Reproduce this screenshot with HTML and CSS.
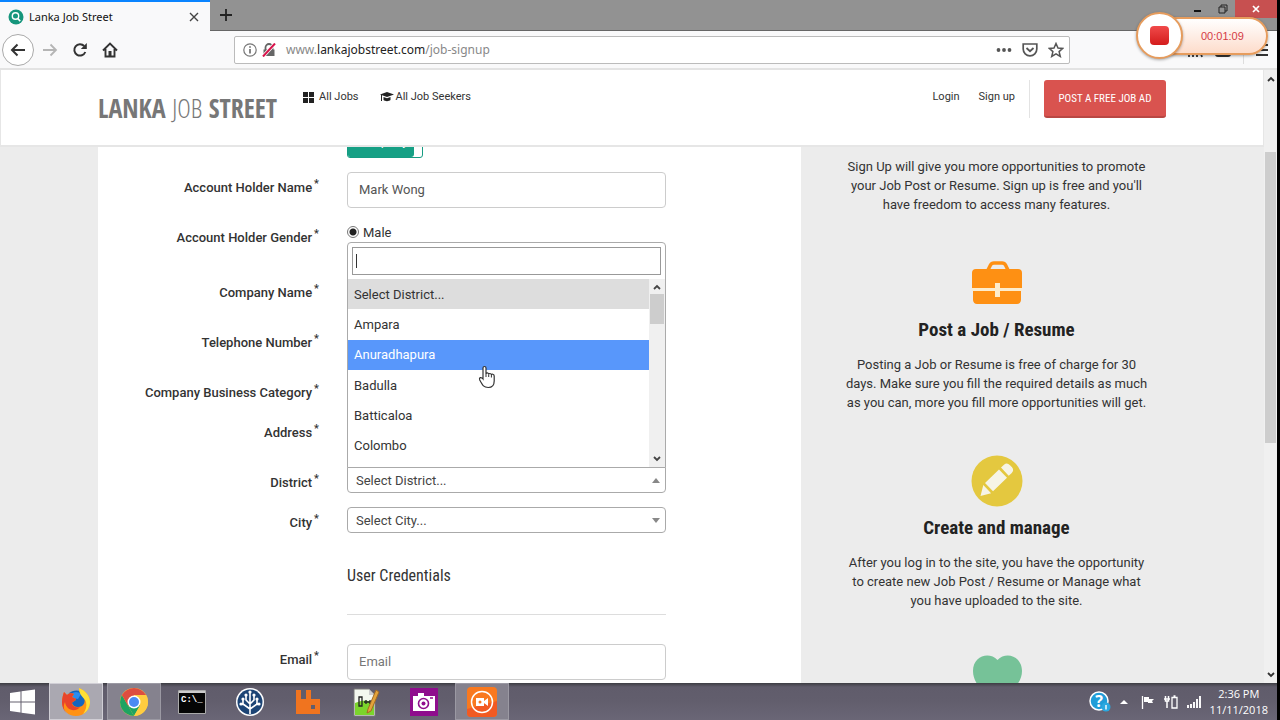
FILE: index.html
```html
<!DOCTYPE html>
<html lang="en">
<head>
    <meta charset="UTF-8">
    <meta name="viewport" content="width=device-width, initial-scale=1.0">
    <title>Lanka Job Street</title>
    <link rel="stylesheet" href="styles.css">
</head>
<body>

<div class="titlebar">
    <div class="tab">
        <svg width="16" height="16" viewBox="0 0 16 16"><circle cx="8" cy="8" r="7.5" fill="#16967c"/><circle cx="7.5" cy="7" r="3.2" fill="none" stroke="#fff" stroke-width="1.4"/><path d="M9.8 9.5l2.4 2.6" stroke="#fff" stroke-width="1.6"/></svg>
        <span class="tab-title">Lanka Job Street</span>
        <button class="icon-btn" aria-label="Close tab"><svg width="10" height="10" viewBox="0 0 10 10"><path d="M1 1l8 8M9 1l-8 8" stroke="#444" stroke-width="1.4"/></svg></button>
    </div>
    <button class="icon-btn new-tab" aria-label="New tab"><svg width="14" height="14" viewBox="0 0 14 14"><path d="M7 1v12M1 7h12" stroke="#222" stroke-width="1.8"/></svg></button>
    <div class="window-buttons">
        <button class="icon-btn" aria-label="Minimize"><svg width="10" height="10" viewBox="0 0 10 10"><path d="M1 7h7" stroke="#111" stroke-width="2"/></svg></button>
        <button class="icon-btn" aria-label="Restore"><svg width="10" height="10" viewBox="0 0 10 10"><path d="M1 3h6v6H1zM3 3V1h6v6H7" fill="none" stroke="#222"/></svg></button>
        <button class="icon-btn close-window" aria-label="Close"><svg width="8" height="8" viewBox="0 0 8 8"><path d="M1 1l6 6M7 1L1 7" stroke="#fff" stroke-width="1.7"/></svg></button>
    </div>
</div>

<div class="toolbar">
    <button class="icon-btn back" aria-label="Back"><svg width="16" height="14" viewBox="0 0 16 14"><path d="M15 7H2M7.5 1.5L2 7l5.500 5.500" fill="none" stroke="#333" stroke-width="2"/></svg></button>
    <button class="icon-btn" aria-label="Forward"><svg width="16" height="14" viewBox="0 0 16 14"><path d="M1 7h13M8.500 1.500L14 7l-5.500 5.500" fill="none" stroke="#b5b5b5" stroke-width="1.800"/></svg></button>
    <button class="icon-btn" aria-label="Reload"><svg width="16" height="16" viewBox="0 0 16 16"><path d="M13.300 10A5.700 5.700 0 1 1 12.200 4" fill="none" stroke="#333" stroke-width="2"/><path d="M14.800 1v6h-6z" fill="#333"/></svg></button>
    <button class="icon-btn" aria-label="Home"><svg width="16" height="16" viewBox="0 0 16 16"><path d="M1 8.500L8 1.500l7 7M3.500 7v7.500h9V7" fill="none" stroke="#333" stroke-width="1.900"/><path d="M6.500 9h3v6h-3z" fill="#333"/></svg></button>
    <div class="urlbar">
        <svg width="14" height="14" viewBox="0 0 14 14"><circle cx="7" cy="7" r="6.200" fill="none" stroke="#777" stroke-width="1.200"/><path d="M7 6v4.500M7 3.200v1.600" stroke="#666" stroke-width="1.600"/></svg>
        <svg width="14" height="14" viewBox="0 0 14 14"><path d="M3.500 7V4.500a3.500 3.500 0 0 1 7 0V7" fill="none" stroke="#666" stroke-width="1.800"/><path d="M1.500 6.500h11V13h-11z" fill="#666"/><path d="M1 13.500L13 .500" stroke="#fff" stroke-width="3.500"/><path d="M1 13.500L13 .500" stroke="#d7134a" stroke-width="2"/></svg>
        <span class="url">www.<b>lankajobstreet.com</b>/job-signup</span>
        <svg width="16" height="16" viewBox="0 0 16 16"><circle cx="2.500" cy="8" r="1.900" fill="#555"/><circle cx="8" cy="8" r="1.900" fill="#555"/><circle cx="13.500" cy="8" r="1.900" fill="#555"/></svg>
        <svg width="16" height="16" viewBox="0 0 16 16"><path d="M1.200 2h13.600v5a6.800 6.800 0 0 1-13.600 0z" fill="none" stroke="#555" stroke-width="1.700"/><path d="M4.500 6L8 9.200 11.500 6" fill="none" stroke="#555" stroke-width="1.800"/></svg>
        <svg width="16" height="16" viewBox="0 0 16 16"><path d="M8 1.500l2 4.500 4.700.4-3.600 3.200 1.200 4.900L8 11.900l-4.300 2.600 1.200-4.900L1.300 6.400 6 6z" fill="none" stroke="#555" stroke-width="1.500"/></svg>
    </div>
    <div class="toolbar-end">
        <svg width="16" height="16" viewBox="0 0 16 16"><path d="M2 2v13M6 2v13M10 2v13M11 3l4 12" stroke="#333" stroke-width="1.800"/></svg>
        <svg width="16" height="16" viewBox="0 0 16 16"><rect x="1" y="3" width="14" height="11" rx="2" fill="none" stroke="#333" stroke-width="2"/></svg>
        <span class="separator"></span>
        <svg width="12" height="14" viewBox="0 0 12 14"><path d="M0 2h12M0 7h12M0 12h12" stroke="#333" stroke-width="1.800"/></svg>
    </div>
</div>

<div class="viewport">
    <div class="page">
        <header class="site-header">
            <div class="container header-row">
                <a class="logo" href="#">LANKA <span>JOB</span> STREET</a>
                <nav class="site-nav">
                    <a href="#"><svg width="11" height="11" viewBox="0 0 11 11"><path d="M0 0h5v5H0zM6 0h5v5H6zM0 6h5v5H0zM6 6h5v5H6z" fill="#222"/></svg> All Jobs</a>
                    <a class="seekers" href="#"><svg width="14" height="12" viewBox="0 0 14 12"><path d="M7 1l7 2.500L7 6 0 3.500z" fill="#222"/><path d="M3.500 6l3.500 1.300L10.500 6v3c-1.500 1.500-5.500 1.500-7 0z" fill="#222"/><path d="M1.500 4v6" stroke="#222"/></svg> All Job Seekers</a>
                </nav>
                <div class="account">
                    <a href="#">Login</a>
                    <a href="#">Sign up</a>
                    <span class="divider"></span>
                    <button class="post-ad">POST A FREE JOB AD</button>
                </div>
            </div>
        </header>

        <div class="content">
            <div class="container columns">
                <form class="signup">
                    <div class="row">
                        <label for="accountType"></label>
                        <button type="button" class="toggle" id="accountType"><span>Company</span></button>
                    </div>
                    <div class="row">
                        <label for="holderName">Account Holder Name<sup>*</sup></label>
                        <input class="text" type="text" id="holderName" value="Mark Wong">
                    </div>
                    <div class="row">
                        <label for="male">Account Holder Gender<sup>*</sup></label>
                        <div class="gender">
                            <input type="radio" id="male" name="gender" checked>
                            <label for="male">Male</label>
                        </div>
                    </div>
                    <div class="row">
                        <label for="companyName">Company Name<sup>*</sup></label>
                        <input class="text" type="text" id="companyName">
                    </div>
                    <div class="row">
                        <label for="phone">Telephone Number<sup>*</sup></label>
                        <input class="text" type="text" id="phone">
                    </div>
                    <div class="row">
                        <label for="category">Company Business Category<sup>*</sup></label>
                        <div class="select"><select id="category"></select></div>
                    </div>
                    <div class="row">
                        <label for="address">Address<sup>*</sup></label>
                        <input class="text" type="text" id="address">
                    </div>
                    <div class="row">
                        <label for="district">District<sup>*</sup></label>
                        <div class="select open">
                            <select id="district"><option>Select District...</option></select>
                            <div class="dropdown">
                                <div class="search"><input type="text" aria-label="Search district"><span class="caret"></span></div>
                                <div class="results">
                                    <ul>
                                        <li class="selected">Select District...</li>
                                        <li>Ampara</li>
                                        <li class="highlighted">Anuradhapura</li>
                                        <li>Badulla</li>
                                        <li>Batticaloa</li>
                                        <li>Colombo</li>
                                    </ul>
                                    <div class="scrollbar">
                                        <svg width="8" height="6" viewBox="0 0 8 6"><path d="M1 5l3-3 3 3" fill="none" stroke="#444" stroke-width="1.800"/></svg>
                                        <span class="thumb"></span>
                                        <svg width="8" height="6" viewBox="0 0 8 6"><path d="M1 1l3 3 3-3" fill="none" stroke="#444" stroke-width="1.800"/></svg>
                                    </div>
                                </div>
                                <svg class="pointer" width="18" height="24" viewBox="0 0 18 24"><path d="M5 14V3c0-2 3-2 3 0v6c0-1.500 2.700-1.500 2.700.5 0-1.500 2.700-1.300 2.700.5 0-1.300 2.800-1 2.800 1v5c0 4-2 6.500-6 6.500-4.500 0-5.500-2-8.500-7.500C.8 12.500 3 11.500 5 14z" fill="#fff" stroke="#333" stroke-width="1.200"/><path d="M8 9v3M10.700 9.500V12M13.400 10v2.500" stroke="#333"/></svg>
                            </div>
                        </div>
                    </div>
                    <div class="row">
                        <label for="city">City<sup>*</sup></label>
                        <div class="select"><select id="city"><option>Select City...</option></select></div>
                    </div>
                    <h3 class="section">User Credentials</h3>
                    <div class="row">
                        <label for="email">Email<sup>*</sup></label>
                        <input class="text" type="email" id="email" placeholder="Email">
                    </div>
                </form>

                <aside class="features">
                    <section>
                        <p>Sign Up will give you more opportunities to promote<br>your Job Post or Resume. Sign up is free and you'll<br>have freedom to access many features.</p>
                    </section>
                    <section>
                        <svg width="52" height="52" viewBox="0 0 52 52"><path d="M17 13l2.500-5Q20.500 6 23 6h8q2.500 0 3.500 2l2.500 5" fill="none" stroke="#fe9013" stroke-width="3.500"/><path d="M5 12h42q4 0 4 4v15H29v-5h-5v5H1V16q0-4 4-4z" fill="#fe9013"/><path d="M24 26h5v14h-5zM1 31h50v3H1z" fill="#fdeccb"/><path d="M2 34h22v6h5v-6h21v9q-.5 4-4 4H6q-3.500 0-4-4z" fill="#fe9013"/></svg>
                        <h3>Post a Job / Resume</h3>
                        <p>Posting a Job or Resume is free of charge for 30<br>days. Make sure you fill the required details as much<br>as you can, more you fill more opportunities will get.</p>
                    </section>
                    <section>
                        <svg width="52" height="52" viewBox="0 0 52 52"><circle cx="26" cy="26" r="25.500" fill="#e4c83f"/><path d="M9.500 41l2.800-11 7.800 8.200zM14 28l14-13.500 8 8.300-14 13.500zM30 12.500l3-2.800q3-2.500 6 .5l2 2q2.500 3-.5 6l-2.800 2.500z" fill="#f6f4e6"/></svg>
                        <h3>Create and manage</h3>
                        <p>After you log in to the site, you have the opportunity<br>to create new Job Post / Resume or Manage what<br>you have uploaded to the site.</p>
                    </section>
                    <section>
                        <svg width="52" height="52" viewBox="0 0 52 52"><path d="M26 50C14 41 2 31 2 18 2 3 18-2 26.500 7 35-2 51 3 51 18c0 13-13 23-25 32z" fill="#76c298"/></svg>
                    </section>
                </aside>
            </div>
        </div>
    </div>
    <div class="page-scrollbar">
        <svg width="8" height="6" viewBox="0 0 8 6"><path d="M1 5l3-3 3 3" fill="none" stroke="#333" stroke-width="1.800"/></svg>
        <span class="track"><span class="thumb"></span></span>
        <svg width="8" height="6" viewBox="0 0 8 6"><path d="M1 1l3 3 3-3" fill="none" stroke="#333" stroke-width="1.800"/></svg>
    </div>
</div>

<div class="taskbar">
    <button class="start" aria-label="Start"><svg width="26" height="26" viewBox="0 0 26 26"><path d="M0 4l10.500-1.500v10H0zM11.500 2.300L25 .5v12H11.500zM0 13.500h10.500v10L0 22zM11.500 13.500H25v12l-13.500-1.800z" fill="#fff"/></svg></button>
    <button class="active" aria-label="Firefox">
        <svg width="30" height="30" viewBox="0 0 30 30"><circle cx="15.500" cy="14.500" r="11" fill="#1565c0"/><path d="M10 7q5-4 10 0l-3 5-6-1z" fill="#2b8df0"/><path d="M18 1c7 3 11 8 11 14a14 14 0 0 1-14 14C7 29 1 23 1 15c0-4 1-7 2-10l3 3c2-2 5-2 7-1l-2 3 4 2c0 2-3 2-4 4 1 4 6 5 10 3 4-3 3-8 0-11-3-3-3-4-3-7z" fill="#ff9214"/><path d="M3 5l3 3c2-2 5-2 7-1l-2 3 4 2c0 2-3 2-4 4 0 3 4 5 8 4-5 6-14 3-15-5-3 6 0 12 6 14C4 27 1 21 1 15c0-4 1-7 2-10z" fill="#e8442b"/><path d="M18 1c7 3 11 8 11 14 0 5-3 10-7 12 3-4 4-8 3-12s-7-6-7-14z" fill="#ffdf34"/></svg>
    </button>
    <button class="running" aria-label="Chrome">
        <svg width="28" height="28" viewBox="0 0 28 28"><circle cx="14" cy="14" r="14" fill="#ffcd40"/><path d="M1.900 7L8 17.500 14 28A14 14 0 0 1 1.900 7z" fill="#1ea362"/><path d="M14 28l6-10.500-6-3.500-6 3.500z" fill="#1ea362"/><path d="M14 14L8 17.500 1.900 7a14 14 0 0 1 24.200 0H14z" fill="#dd4d40"/><path d="M26.100 7A14 14 0 0 1 14 28l6-10.500V7z" fill="#ffcd40"/><circle cx="14" cy="14" r="6.500" fill="#fff"/><circle cx="14" cy="14" r="5" fill="#4a8af4"/></svg>
    </button>
    <button aria-label="Command Prompt">
        <svg width="28" height="24" viewBox="0 0 28 24"><path d="M.5.500h27v23H.5z" fill="#050505" stroke="#aaa"/><path d="M1 1h26v2H1z" fill="#ccc"/><text x="3" y="12" class="cmd-text">C:\_</text></svg>
    </button>
    <button aria-label="SourceTree">
        <svg width="30" height="30" viewBox="0 0 30 30"><circle cx="15" cy="15" r="14" fill="#fff"/><circle cx="15" cy="15" r="12.500" fill="#1c4475"/><path d="M15 27V6M15 22l-7-5v-4M15 17l-4-4V8M15 22l7-5v-4M15 17l4-4V8M10 18l-4-1M20 18l4-1" fill="none" stroke="#fff" stroke-width="1.600"/><g fill="#fff"><circle cx="15" cy="5" r="1.600"/><circle cx="11" cy="8" r="1.600"/><circle cx="19" cy="8" r="1.600"/><circle cx="8" cy="12" r="1.600"/><circle cx="22" cy="12" r="1.600"/><circle cx="6" cy="17" r="1.600"/><circle cx="24" cy="17" r="1.600"/></g></svg>
    </button>
    <button aria-label="RabbitMQ">
        <svg width="24" height="24" viewBox="0 0 24 24"><path d="M0 0h5v9h5V0h5v9h9v15H0z" fill="#f0741f"/><path d="M15 15h4v4h-4z" fill="#625e6d"/></svg>
    </button>
    <button aria-label="Notepad++">
        <svg width="28" height="30" viewBox="0 0 28 30"><path d="M2 2h15l6 6v21H2z" fill="#f4f8ef" stroke="#777"/><path d="M3 16q10-5 19 0v12H3z" fill="#7bd42c"/><path d="M17 2v6h6z" fill="#ccc"/><path d="M7 10h3v9H7zM12 15h7M14 13v4M18 13v4" fill="none" stroke="#222" stroke-width="1.300"/><path d="M24 3l3 2-8 19-4 2 1-4z" fill="#e3a33a" stroke="#a36a24"/></svg>
    </button>
    <button aria-label="Screenshot tool">
        <svg width="28" height="28" viewBox="0 0 28 28"><path d="M0 0h28v28H0z" fill="#8f0d8d"/><path d="M3 8h5V5h6v3h11v15H3z" fill="#fff"/><circle cx="13.500" cy="15.500" r="5" fill="none" stroke="#8f0d8d" stroke-width="1.600"/><circle cx="13.500" cy="15.500" r="2" fill="#8f0d8d"/><path d="M20 10h3" stroke="#8f0d8d" stroke-width="1.500"/></svg>
    </button>
    <button class="running" aria-label="Screen recorder">
        <svg width="30" height="30" viewBox="0 0 30 30"><rect width="30" height="30" rx="4" fill="#f9791f"/><path d="M0 22l30-8v12q0 4-4 4H4q-4 0-4-4z" fill="#f25a22"/><circle cx="15" cy="15" r="10.500" fill="none" stroke="#fff" stroke-width="1.500"/><path d="M9 11h8v3l4-3v8l-4-3v3H9z" fill="#fff"/><circle cx="13" cy="15" r="1.500" fill="#f9791f"/></svg>
    </button>
    <div class="tray">
        <svg width="22" height="22" viewBox="0 0 22 22"><circle cx="10" cy="10" r="9" fill="#209dd8" stroke="#fff" stroke-width="1.500"/><text x="10" y="16" class="help-text">?</text><circle cx="17" cy="16" r="4.500" fill="#2ba8e0"/><path d="M17 14v4.500" stroke="#fff" stroke-width="1.400"/></svg>
        <svg class="more" width="8" height="5" viewBox="0 0 8 5"><path d="M0 5l4-4 4 4z" fill="#fff"/></svg>
        <svg width="14" height="14" viewBox="0 0 14 14"><path d="M1.500 1v13" stroke="#fff" stroke-width="1.300"/><path d="M3 2h5v2h5l-2 2 1 2H7V7H3z" fill="#fff"/></svg>
        <svg width="14" height="14" viewBox="0 0 14 14"><path d="M8 2.500h5v10.500H8zM9.500 1h2" fill="none" stroke="#fff" stroke-width="1.300"/><path d="M0 4h6M1.500 1v5h3V1M3 6v7" fill="none" stroke="#fff" stroke-width="1.500"/></svg>
        <svg width="14" height="12" viewBox="0 0 14 12"><path d="M1 12V9M4 12V8M7 12V6M10 12V3M13 12V0" stroke="#fff" stroke-width="1.900"/></svg>
        <div class="clock">2:36 PM<br>11/11/2018</div>
    </div>
</div>

<div class="recorder">
    <button class="stop" aria-label="Stop recording"><span></span></button>
    <span class="time">00:01:09</span>
</div>

</body>
</html>
```
FILE: styles.css
```css
* {
    box-sizing: border-box;
}
body {
    margin: 0;
    height: 100vh;
    padding-right: 3px;
    display: flex;
    flex-direction: column;
    overflow: hidden;
    position: relative;
    background: #000;
    color: #333;
    font-family: Roboto, sans-serif;
    font-size: 13px;
}
svg {
    display: block;
    flex: none;
}
button, input, select {
    font: inherit;
}
a {
    color: inherit;
    text-decoration: none;
}

/* browser window */
.icon-btn {
    display: flex;
    align-items: center;
    justify-content: center;
    padding: 0;
    border: 0;
    background: none;
}
.titlebar {
    flex: none;
    height: 31px;
    display: flex;
    background: #929292;
    border-bottom: 1px solid #666;
}
.tab {
    width: 210px;
    height: 31px;
    display: flex;
    align-items: center;
    gap: 5px;
    padding: 0 11px 0 8px;
    background: #f9f9fa;
    border-top: 2px solid #0a84ff;
}
.tab-title {
    flex: 1;
    font: 11px "Noto Sans", sans-serif;
    color: #111;
}
.new-tab {
    width: 32px;
}
.window-buttons {
    margin-left: auto;
    display: flex;
    height: 18px;
}
.window-buttons .icon-btn {
    width: 25px;
}
.window-buttons .close-window {
    width: 42px;
    background: #c75050;
}
.toolbar {
    flex: none;
    height: 39px;
    display: flex;
    align-items: center;
    gap: 14px;
    padding: 0 9px 0 2px;
    background: #f9f9fa;
    border-bottom: 2px solid #e3e3e3;
}
.back {
    width: 32px;
    height: 32px;
    margin-right: -6px;
    border: 1px solid #aaa;
    border-radius: 50%;
    background: #fff;
}
.urlbar {
    flex: 1;
    height: 28px;
    display: flex;
    align-items: center;
    gap: 10px;
    margin-left: 102px;
    padding: 0 5px 0 8px;
    background: #fff;
    border: 1px solid #bbb;
    border-radius: 2px;
}
.urlbar svg:nth-child(2) {
    margin-left: -5px;
}
.url {
    flex: 1;
    font: 12px "Noto Sans", sans-serif;
    color: #888;
}
.url b {
    font-weight: normal;
    color: #222;
}
.toolbar-end {
    width: 184px;
    display: flex;
    align-items: center;
    justify-content: flex-end;
    gap: 12px;
}
.separator {
    width: 1px;
    height: 28px;
    background: #ddd;
}

/* site */
.viewport {
    flex: 1;
    min-height: 0;
    display: flex;
    background: #ececec;
}
.page {
    flex: 1;
    min-width: 0;
    display: flex;
    flex-direction: column;
}
.container {
    max-width: 1068px;
    margin: 0 auto;
}
.site-header {
    flex: none;
    height: 77px;
    background: #fff;
    border: 1px solid #e6e6e6;
    border-width: 0 1px 2px;
}
.header-row {
    display: flex;
    align-items: flex-start;
    padding-top: 10px;
}
.logo {
    padding-top: 8px;
    font: bold 26px/40px "Open Sans Condensed", "Liberation Sans Narrow", sans-serif;
    color: #777;
}
.logo span {
    font-family: "Open Sans Condensed Light", "Roboto Condensed Light", "Roboto Condensed", sans-serif;
    font-weight: 300;
}
.site-nav {
    display: flex;
    gap: 21px;
    margin-left: 26px;
    font-size: 11px;
    line-height: 34px;
}
.site-nav a {
    display: flex;
    align-items: center;
    gap: 5px;
}
.site-nav .seekers {
    gap: 2px;
}
.account {
    margin-left: auto;
    display: flex;
    font-size: 11px;
    line-height: 34px;
}
.account a {
    margin-right: 19px;
}
.divider {
    width: 1px;
    margin: 0 14px 0 -5px;
    background: #e3e3e3;
}
.post-ad {
    width: 122px;
    height: 38px;
    padding: 0;
    border: 0;
    border-bottom: 2px solid #b94743;
    border-radius: 3px;
    background: #d9534f;
    color: #fff;
    font: 11px "Roboto Condensed", "Liberation Sans Narrow", sans-serif;
}
.content {
    flex: 1;
    min-height: 0;
    overflow: hidden;
}
.columns {
    display: flex;
    gap: 26px;
    margin-top: -23px;
}
.signup {
    flex: 1;
    display: flex;
    flex-direction: column;
    gap: 14px;
    padding: 0 135px 40px 0;
    background: #fff;
}
.row {
    display: grid;
    grid-template-columns: 1fr 319px;
    column-gap: 28px;
}
.row > label {
    padding-top: 6px;
    height: 26px;
    line-height: 19px;
    font-weight: 500;
    text-align: right;
    white-space: nowrap;
}
sup {
    margin-left: 2px;
    font-size: 11px;
    line-height: 0;
}
.toggle {
    width: 76px;
    height: 34px;
    padding: 0 8px 0 0;
    border: 1px solid #169c82;
    border-radius: 3px;
    background: #fff;
    color: #fff;
    overflow: hidden;
}
.toggle span {
    display: block;
    height: 32px;
    line-height: 32px;
    border-radius: 0 3px 3px 0;
    background: #16a085;
}
.text {
    width: 100%;
    height: 36px;
    padding: 0 11px 2px;
    border: 1px solid #ccc;
    border-radius: 4px;
    color: #555;
}
.text::placeholder {
    color: #777;
}
.gender {
    height: 41px;
    display: flex;
    align-items: flex-start;
    gap: 4px;
    line-height: 22px;
}
.gender input {
    appearance: none;
    width: 12px;
    height: 12px;
    margin: 4px 0;
    border: 1px solid #777;
    border-radius: 50%;
    background: radial-gradient(#222 0 3px, #fff 4px);
}
.select {
    position: relative;
}
.select select {
    appearance: none;
    display: block;
    width: 100%;
    height: 26px;
    padding: 0 8px;
    border: 1px solid #aaa;
    border-radius: 4px;
    background: #fff;
    color: #444;
}
.select::after {
    content: "";
    position: absolute;
    right: 6px;
    top: 11px;
    border: 4px solid transparent;
    border-top: 5px solid #888;
    border-bottom: 0;
}
.open::after {
    border-top: 0;
    border-bottom: 5px solid #888;
}
.select.open select {
    border-radius: 0 0 4px 4px;
}
.dropdown {
    position: absolute;
    left: 0;
    right: 0;
    bottom: 25px;
    z-index: 1;
    height: 226px;
    display: flex;
    flex-direction: column;
    border: 1px solid #aaa;
    border-radius: 4px 4px 0 0;
    background: #fff;
}
.search {
    position: relative;
    padding: 4px;
}
.search input {
    display: block;
    width: 100%;
    height: 28px;
    border: 1px solid #999;
}
.caret {
    position: absolute;
    left: 8px;
    top: 11px;
    width: 1px;
    height: 14px;
    background: #333;
}
.results {
    flex: 1;
    display: flex;
    overflow: hidden;
}
.results ul {
    flex: 1;
    display: flex;
    flex-direction: column;
    margin: 0;
    padding: 0 0 6px;
    list-style: none;
}
.results li {
    flex: 1;
    display: flex;
    align-items: center;
    padding: 0 6px;
}
.results .selected {
    background: #ddd;
}
.results .highlighted {
    background: #5897fb;
    color: #fff;
}
.scrollbar {
    width: 16px;
    display: flex;
    flex-direction: column;
    align-items: center;
    gap: 4px;
    padding: 5px 1px;
    background: #f0f0f0;
}
.scrollbar .thumb {
    width: 14px;
    height: 30px;
    margin-bottom: auto;
    background: #cdcdcd;
}
.pointer {
    position: absolute;
    left: 130px;
    top: 122px;
}
.section {
    margin: 10px 0 15px auto;
    width: 319px;
    height: 58px;
    border-bottom: 1px solid #ddd;
    font: 16px/38px "Roboto Condensed", "Liberation Sans Narrow", sans-serif;
}
.features {
    width: 339px;
    padding: 33px 12px 0;
    text-align: center;
}
.features section {
    display: flex;
    flex-direction: column;
    align-items: center;
    margin-bottom: 43px;
}
.features p {
    margin: 0;
    line-height: 19px;
}
.features h3 {
    margin: 10px 0 14px;
    font: bold 19px/22px "Roboto Condensed", "Liberation Sans Narrow", sans-serif;
    color: #222;
}
.page-scrollbar {
    width: 13px;
    display: flex;
    flex-direction: column;
    align-items: center;
    padding: 6px 0 5px;
    background: #f0f0f0;
}
.track {
    flex: 1;
    width: 11px;
    padding-top: 70px;
}
.track .thumb {
    display: block;
    height: 56%;
    background: #cdcdcd;
}

/* taskbar */
.taskbar {
    flex: none;
    height: 37px;
    display: flex;
    gap: 4px;
    background: linear-gradient(#3d3d43, #605c6b 4px, #625e6d 50%, #6a6676);
    color: #fff;
}
.taskbar button {
    width: 54px;
    display: flex;
    align-items: center;
    justify-content: center;
    padding: 0;
    border: 1px solid transparent;
    background: none;
}
.taskbar .start {
    width: 45px;
}
.taskbar .active {
    background: #aaa8b1;
    border-color: #d0ced5;
}
.taskbar .running {
    background: #85828e;
    border-color: #9b99a3;
}
.cmd-text {
    font: bold 9px "Liberation Mono", monospace;
    fill: #fff;
}
.help-text {
    font: bold 16px "Noto Sans", sans-serif;
    fill: #fff;
    text-anchor: middle;
}
.tray {
    margin-left: auto;
    display: flex;
    align-items: center;
    gap: 9px;
    padding-right: 9px;
}
.more {
    margin-right: 4px;
}
.clock {
    font: 11px/16px "Open Sans", sans-serif;
    text-align: center;
}

/* recorder overlay */
.recorder {
    position: absolute;
    right: 12px;
    top: 12px;
    display: flex;
    align-items: center;
}
.stop {
    z-index: 1;
    width: 47px;
    height: 47px;
    display: flex;
    align-items: center;
    justify-content: center;
    padding: 0;
    border: 2px solid #e69c5d;
    border-radius: 50%;
    background: #fff;
    box-shadow: 0 1px 3px #0005;
}
.stop span {
    width: 19px;
    height: 19px;
    border-radius: 4px;
    background: linear-gradient(#f04a4a, #d41c1c);
}
.time {
    width: 108px;
    height: 38px;
    margin-left: -23px;
    padding-left: 39px;
    border: 2px solid #e69c5d;
    border-radius: 0 19px 19px 0;
    background: linear-gradient(#fff, #fddccb);
    box-shadow: 0 1px 3px #0005;
    color: #d43b45;
    font: 11px/34px "Liberation Sans", sans-serif;
}
```
